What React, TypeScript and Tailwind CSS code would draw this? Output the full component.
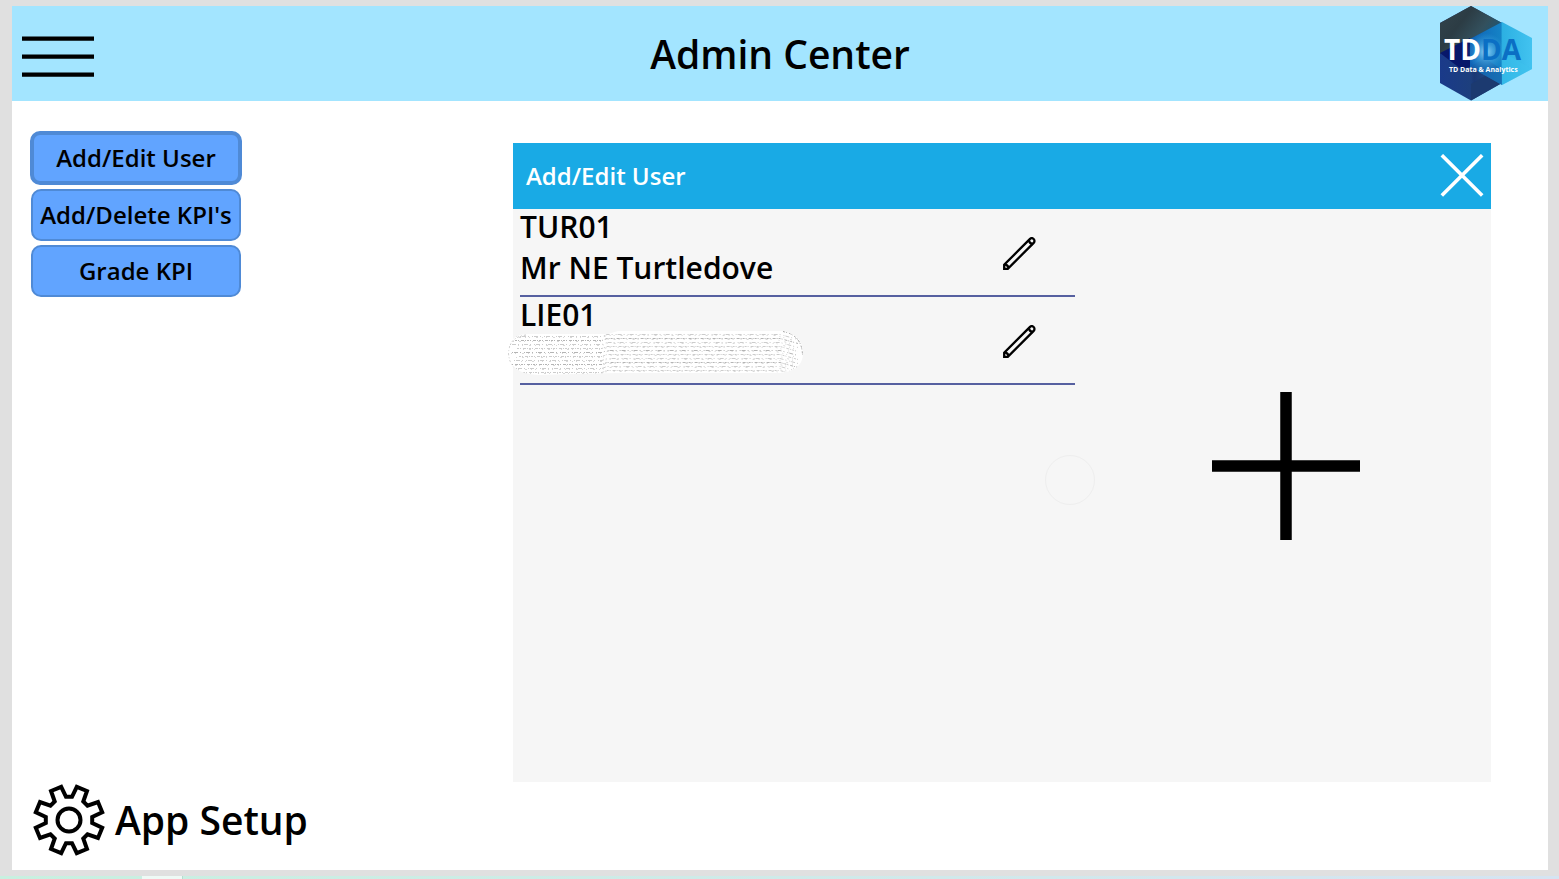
import React, { useState } from "react";

type User = { code: string; name: string | null };

const USERS: User[] = [
  { code: "TUR01", name: "Mr NE Turtledove" },
  { code: "LIE01", name: null },
];

const SECTIONS = ["Add/Edit User", "Add/Delete KPI's", "Grade KPI"];

function MenuIcon() {
  return (
    <svg width="72" height="42" viewBox="0 0 72 42" fill="none" stroke="#000" strokeWidth="4.4" aria-hidden="true">
      <path d="M0 2.6H72M0 20.6H72M0 38.6H72" />
    </svg>
  );
}

function Logo() {
  return (
    <svg width="94" height="96" viewBox="0 0 94 96" role="img" aria-label="TDDA, TD Data & Analytics">
      <defs>
        <linearGradient id="slate" x1="0" y1="0" x2="1" y2="0.6">
          <stop offset="0" stopColor="#33444c" />
          <stop offset="0.4" stopColor="#2c3c44" />
          <stop offset="0.7" stopColor="#33505d" />
          <stop offset="1" stopColor="#17597c" />
        </linearGradient>
        <linearGradient id="navy" x1="0" y1="0" x2="1" y2="0">
          <stop offset="0" stopColor="#1a3a8a" />
          <stop offset="0.5" stopColor="#1d3f7d" />
          <stop offset="0.55" stopColor="#1a3874" />
          <stop offset="1" stopColor="#24568f" />
        </linearGradient>
        <linearGradient id="sky" x1="0" y1="0" x2="1" y2="0">
          <stop offset="0" stopColor="#0f62b5" />
          <stop offset="0.5" stopColor="#1583c6" />
          <stop offset="0.52" stopColor="#2cb0e2" />
          <stop offset="1" stopColor="#42c3f0" />
        </linearGradient>
        <radialGradient id="glow">
          <stop offset="0" stopColor="#a6e2ff" stopOpacity="0.9" />
          <stop offset="0.5" stopColor="#52b4ea" stopOpacity="0.5" />
          <stop offset="1" stopColor="#39a9e4" stopOpacity="0" />
        </radialGradient>
      </defs>
      <path d="M32 0L63 17V77L32 94.500L1 77V17Z" fill="url(#navy)" />
      <path d="M32 0L63 17L31 33L1 48V17Z" fill="url(#slate)" />
      <path d="M1 47L31 32V61L22 63Z" fill="#08176a" />
      <path d="M32 78L63 60V77L32 94.500Z" fill="#1c3a70" />
      <path d="M63 16L93 32V63L63 79L31 61V33Z" fill="url(#sky)" />
      <path d="M63 79L93 63L63 46Z" fill="#3fc4ee" opacity="0.45" />
      <path d="M31 61L46 52L63 64V79Z" fill="#1a5fa6" opacity="0.55" />
      <circle cx="47" cy="46" r="19" fill="url(#glow)" />
      <text x="5" y="54" fontFamily="Open Sans, sans-serif" fontWeight="700" fontSize="28" fill="#fff">
        TD<tspan fill="#0b6fc4">DA</tspan>
      </text>
      <text x="10" y="66" fontFamily="Open Sans, sans-serif" fontWeight="700" fontSize="7" fill="#fff">
        TD Data &amp; Analytics
      </text>
    </svg>
  );
}

function CloseIcon() {
  return (
    <svg width="44" height="44" viewBox="0 0 44 44" fill="none" stroke="#fff" strokeWidth="3.6" aria-hidden="true">
      <path d="M1.800 1.200L42.200 41.600M42.200 1.200L1.800 41.600" />
    </svg>
  );
}

function PencilIcon() {
  return (
    <svg width="34" height="34" viewBox="0 0 34 34" fill="none" stroke="#000" strokeWidth="2.3" strokeLinejoin="miter" aria-hidden="true">
      <path d="M1.200 31.800V27.800L26.800 2.100A2.700 2.700 0 0 1 30.700 5.900L4.800 31.800Z" />
      <path d="M25.800 3.300Q26.500 6.600 29.600 7M1.800 27.400Q5 28 5.600 31" />
    </svg>
  );
}

function PlusIcon() {
  return (
    <svg width="148" height="148" viewBox="0 0 148 148" fill="none" stroke="#000" strokeWidth="11.500" aria-hidden="true">
      <path d="M0 74H148M74 0V148" />
    </svg>
  );
}

function GearIcon() {
  const profile = [
    [-7.8, -33.2],
    [-3, -23.2],
    [3, -23.2],
    [7.8, -33.2],
  ];
  const points = Array.from({ length: 8 }, (_, i) => {
    const a = (i * Math.PI) / 4;
    return profile
      .map(([x, y]) => `${x * Math.cos(a) - y * Math.sin(a)},${x * Math.sin(a) + y * Math.cos(a)}`)
      .join(" ");
  }).join(" ");
  return (
    <svg width="72" height="72" viewBox="-36 -36 72 72" fill="none" stroke="#000" strokeWidth="4" aria-hidden="true">
      <polygon points={points} />
      <circle r="11.500" />
    </svg>
  );
}

function Scribble() {
  const rows = Array.from({ length: 10 }, (_, i) => i);
  return (
    <svg width="296" height="44" viewBox="0 0 296 44" fill="none" aria-hidden="true">
      <defs>
        <clipPath id="stroke-shape">
          <path d="M18 3H100L110 0H275Q295 4 295 22T272 42H110L30 44Q0 42 0 23T18 3Z" />
        </clipPath>
      </defs>
      <g clipPath="url(#stroke-shape)">
        <rect width="296" height="44" fill="#fff" />
        {rows.map((i) => (
          <g key={i} strokeWidth="1">
            <path
              d={`M${(i * 7) % 12} ${5.5 + i * 4}H94l5 -2H272l18 5`}
              stroke={i % 3 === 1 ? "#b4b4b4" : "#cccccc"}
              strokeDasharray={i % 2 ? "2 1 1 2 3 1 1 1" : "1 1 4 2 1 3"}
            />
            <path
              d={`M${(i * 5) % 17} ${6.5 + i * 4}H94l5 -2H268l18 5`}
              stroke="#d8d8d8"
              strokeDasharray={i % 2 ? "1 5 2 3 1 7" : "1 3 1 6 2 4"}
            />
          </g>
        ))}
        <path d="M275 0.500Q294 4 294.500 24" stroke="#999" strokeDasharray="2 1 1 2" />
        <path d="M18 4Q1 6 0.500 22Q1 36 12 41" stroke="#c4c4c4" strokeDasharray="2 2 1 2" />
      </g>
    </svg>
  );
}

function UserRow({ user }: { user: User }) {
  return (
    <li className="relative flex h-[88px] items-start justify-between border-b-2 border-[#5660a0] pr-[38px]">
      <div className="text-[30px] leading-[41px] font-semibold whitespace-nowrap">
        <p className="-mt-[3px]">{user.code}</p>
        {user.name && <p>{user.name}</p>}
      </div>
      {!user.name && (
        <div className="absolute top-[34px] -left-3">
          <Scribble />
        </div>
      )}
      <button type="button" aria-label={`Edit ${user.code}`} className="mt-7 cursor-pointer">
        <PencilIcon />
      </button>
    </li>
  );
}

export default function App() {
  const [active, setActive] = useState(0);

  return (
    <div className="flex min-h-screen flex-col bg-[#e0e0e0] font-['Open_Sans',sans-serif] text-black">
      <div className="mt-1.5 mr-[11px] mb-1.5 ml-3 flex grow flex-col bg-white">
        <header className="grid h-[95px] grid-cols-[1fr_auto_1fr] items-center bg-[#a3e5ff] px-2.5">
          <button type="button" aria-label="Menu" className="mt-1.5 cursor-pointer justify-self-start">
            <MenuIcon />
          </button>
          <h1 className="text-[39px] leading-[52px] font-semibold">Admin Center</h1>
          <div className="mr-[5px] justify-self-end">
            <Logo />
          </div>
        </header>

        <main className="flex grow">
          <aside className="flex w-[501px] shrink-0 flex-col justify-between pt-[30px] pb-3.5">
            <nav className="ml-[18px] flex w-[212px] flex-col items-center gap-1">
              {SECTIONS.map((label, i) => (
                <button
                  key={label}
                  type="button"
                  onClick={() => setActive(i)}
                  className={
                    i === active
                      ? "h-[54px] w-[212px] cursor-pointer rounded-[10px] border-4 border-[#4f8ad6] bg-[#61a4ff] text-[24px] font-semibold whitespace-nowrap"
                      : "h-[52px] w-[210px] cursor-pointer rounded-[10px] border-2 border-[#4f8ad6] bg-[#61a4ff] text-[24px] font-semibold whitespace-nowrap"
                  }
                >
                  {label}
                </button>
              ))}
            </nav>
            <button type="button" className="ml-[21px] flex cursor-pointer items-center gap-2.5 self-start">
              <GearIcon />
              <span className="text-[39px] leading-[52px] font-semibold">App Setup</span>
            </button>
          </aside>

          <section className="mt-[42px] mr-[57px] mb-[88px] flex grow flex-col bg-[#f6f6f6]">
            <div className="flex h-[66px] items-center justify-between bg-[#19aae5] pr-[7px] pl-[13px]">
              <h2 className="text-[24px] leading-8 font-semibold text-white">Add/Edit User</h2>
              <button type="button" aria-label="Close" className="cursor-pointer">
                <CloseIcon />
              </button>
            </div>
            <div className="relative flex grow">
              <ul className="ml-[7px] w-[555px] shrink-0">
                {USERS.map((user) => (
                  <UserRow key={user.code} user={user} />
                ))}
              </ul>
              <div className="flex grow items-start justify-center pt-[183px] pl-1.5">
                <button type="button" aria-label="Add user" className="cursor-pointer">
                  <PlusIcon />
                </button>
              </div>
              <div className="absolute top-[246px] left-[532px] size-[50px] rounded-full border border-[#eeeeee]" />
            </div>
          </section>
        </main>
      </div>
      <div className="flex h-[3px] bg-linear-to-r from-[#c8f0e0] to-[#d5e4f2]">
        <div className="ml-[142px] w-[41px] border-r border-[#b5dccf] bg-[#eefaf6]" />
      </div>
    </div>
  );
}
